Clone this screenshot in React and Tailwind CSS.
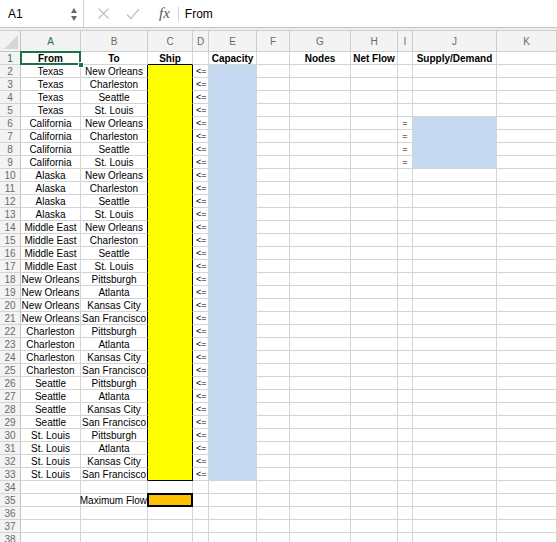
import React from 'react';

// column widths: row header, A..K
const COLS = [
   'w-[21px]', 'w-[60px]', 'w-[67px]', 'w-[45px]', 'w-[16px]', 'w-[48px]',
   'w-[33px]', 'w-[61px]', 'w-[47px]', 'w-[15px]', 'w-[84px]', 'w-[60px]'
];
const LETTERS = ['A', 'B', 'C', 'D', 'E', 'F', 'G', 'H', 'I', 'J', 'K'];

const SOURCES = ['Texas', 'California', 'Alaska', 'Middle East'];
const HUBS = ['New Orleans', 'Charleston', 'Seattle', 'St. Louis'];
const SINKS = ['Pittsburgh', 'Atlanta', 'Kansas City', 'San Francisco'];

const ARCS = [
   ...SOURCES.flatMap(s => HUBS.map(h => [s, h])),
   ...HUBS.flatMap(h => SINKS.map(k => [h, k]))
];

const HEADERS = { 1: 'From', 2: 'To', 3: 'Ship', 5: 'Capacity', 7: 'Nodes', 8: 'Net Flow', 10: 'Supply/Demand' };

const GRID_R = 'border-r-[#d4d4d4]';
const GRID_B = 'border-b-[#d4d4d4]';

const cellFor = (r, c) => {
   let text = null;
   let align = 'justify-center';
   let bold = false;
   let small = false;
   let bg = '';
   let rc = GRID_R;
   let bc = GRID_B;
   let extra = null;

   if (r === 1 && HEADERS[c]) {
      text = HEADERS[c];
      bold = true;
   }
   const arc = r >= 2 && r <= 33 ? ARCS[r - 2] : null;

   if (c === 1) {
      if (arc) text = arc[0];
      if (r === 1) {
         extra = (
            <>
               <span className="absolute -left-px -top-px -right-px -bottom-px border-2 border-[#1e7145] z-10 pointer-events-none" />
               <span className="absolute -right-[4px] -bottom-[4px] w-[6px] h-[6px] bg-[#1e7145] border border-white z-20" />
            </>
         );
      }
   }
   if (c === 2) {
      if (arc) {
         text = arc[1];
         rc = 'border-r-black';
      }
      if (r === 35) {
         text = 'Maximum Flow';
         align = 'justify-end';
      }
   }
   if (c === 3) {
      if (r === 1) bc = 'border-b-black';
      if (arc) {
         bg = 'bg-[#ffff00]';
         rc = 'border-r-black';
         bc = r === 33 ? 'border-b-black' : 'border-b-[#ffff00]';
      }
      if (r === 35) {
         extra = <span className="absolute -left-px -top-px -right-px -bottom-px border-2 border-black bg-[#ffc000] z-10" />;
      }
   }
   if (c === 4 && arc) {
      text = '<=';
      small = true;
      align = 'justify-start pl-[3px]';
   }
   if (c === 5 && arc) {
      bg = 'bg-[#c5d9f1]';
      if (r < 33) bc = 'border-b-[#c5d9f1]';
   }
   if (c === 9 && r >= 6 && r <= 9) {
      text = '=';
      small = true;
   }
   if (c === 10 && r >= 6 && r <= 9) {
      bg = 'bg-[#c5d9f1]';
      if (r < 9) bc = 'border-b-[#c5d9f1]';
   }

   return { text, align, bold, small, bg, rc, bc, extra };
};

const Row = ({ r }) => (
   <div className="flex h-[13px]">
      <div className={`${COLS[0]} shrink-0 flex items-center justify-center border-r border-b border-r-[#c4c4c4] border-b-[#d4d4d4] bg-[#f3f3f3] text-[10px] leading-none ${r === 1 ? 'text-[#1e7145]' : 'text-[#6a6a6a]'}`}>
         <span className="pt-px">{r}</span>
      </div>
      {LETTERS.map((_, i) => {
         const c = i + 1;
         const cell = cellFor(r, c);
         return (
            <div
               key={c}
               className={`${COLS[c]} shrink-0 relative flex items-center whitespace-nowrap border-r border-b ${cell.rc} ${cell.bc} ${cell.bg} ${cell.align} ${cell.small ? 'text-[9px]' : 'text-[10px]'} leading-none text-black ${cell.bold ? 'font-bold' : ''}`}
            >
               {cell.extra}
               {cell.text && <span className="relative z-0 pt-px">{cell.text}</span>}
            </div>
         );
      })}
   </div>
);

const FormulaBar = () => (
   <div className="flex h-[28px] bg-white border-b border-[#c6c6c6]">
      <div className="w-[84px] shrink-0 flex items-center justify-between pl-[8px] pr-[5px] border-r border-[#d2d2d2]">
         <span className="text-[12px] text-black">A1</span>
         <svg width="8" height="18" viewBox="0 0 8 18">
            <path d="M4 3 L7 8 L1 8 Z" fill="#6b6b6b" />
            <path d="M4 16 L7 11 L1 11 Z" fill="#6b6b6b" />
         </svg>
      </div>
      <div className="flex items-center pl-[13px]">
         <svg width="13" height="13" viewBox="0 0 13 13">
            <path d="M1.5 1.5 L11.5 11.5 M11.5 1.5 L1.5 11.5" stroke="#c2c2c2" strokeWidth="1.3" fill="none" />
         </svg>
         <svg className="ml-[16px]" width="14" height="12" viewBox="0 0 14 12">
            <path d="M1 6.5 L5 10.5 L13 1" stroke="#c2c2c2" strokeWidth="1.3" fill="none" />
         </svg>
         <span className="ml-[19px] text-[15px] italic text-[#555] font-['Liberation_Serif',serif] leading-none">fx</span>
         <span className="ml-[8px] w-px h-[14px] bg-[#d2d2d2]" />
         <span className="ml-[6px] text-[12px] text-black">From</span>
      </div>
   </div>
);

const ColumnHeaders = () => (
   <div className="flex h-[21px] bg-[#f3f3f3]">
      <div className={`${COLS[0]} shrink-0 relative border-r border-b border-[#c4c4c4]`}>
         <svg className="absolute left-[4px] top-[4px]" width="14" height="14" viewBox="0 0 14 14">
            <path d="M14 0 L14 14 L0 14 Z" fill="#d6d6d6" />
         </svg>
      </div>
      {LETTERS.map((l, i) => (
         <div
            key={l}
            className={`${COLS[i + 1]} shrink-0 flex items-center justify-center border-r border-b border-[#cdcdcd] text-[10px] ${l === 'A' ? 'text-[#1e7145]' : 'text-[#6a6a6a]'}`}
         >
            {l}
         </div>
      ))}
   </div>
);

export default function App() {
   const rows = Array.from({ length: 38 }, (_, i) => i + 1);
   return (
      <div className="w-[557px] h-[542px] overflow-hidden bg-white font-['Liberation_Sans',Arial,sans-serif]">
         <FormulaBar />
         <div className="h-[3px] bg-[#ededed] border-b border-[#cfcfcf]" />
         <ColumnHeaders />
         {rows.map(r => <Row key={r} r={r} />)}
      </div>
   );
}
